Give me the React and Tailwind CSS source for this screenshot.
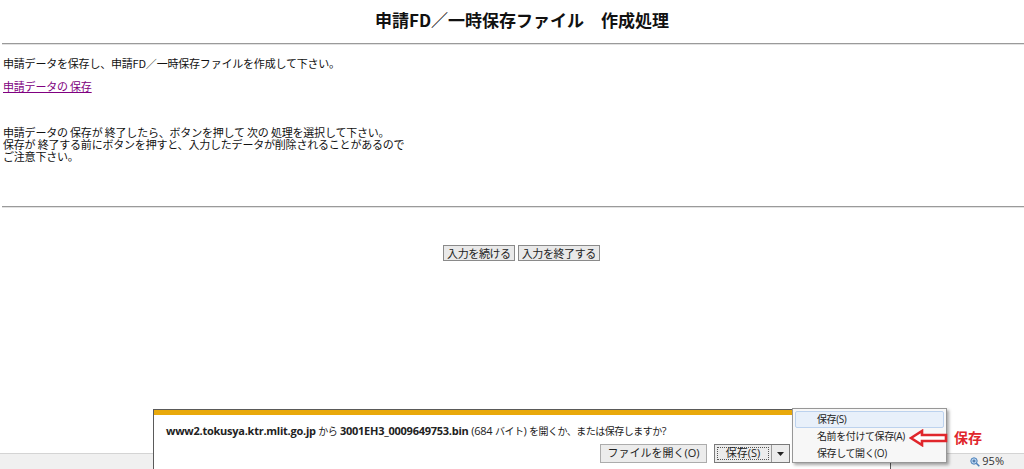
import React from 'react';

const JP = { fontFamily: '"MS PGothic", "Noto Sans CJK JP", sans-serif' };
const UI = { fontFamily: '"Open Sans", "Noto Sans CJK JP", sans-serif' };

function PageButton({ children }) {
  return (
    <button
      className="h-[16px] px-[3px] border border-[#8a8a8a] bg-[#e9e9e9] text-[11px] leading-[14px] tracking-[-0.4px] text-[#222]"
      style={JP}
    >
      {children}
    </button>
  );
}

function Rule() {
  return <div className="ml-[2px] h-[2px] border-t border-[#9a9a9a] border-b border-b-[#e2e2e2]" />;
}

function RedArrow() {
  return (
    <svg width="40" height="18" viewBox="0 0 40 18">
      <polygon
        points="2,9 13,2 13,6 37,6 37,12 13,12 13,16"
        fill="#fff"
        stroke="#e0262b"
        strokeWidth="2.6"
        strokeLinejoin="miter"
      />
    </svg>
  );
}

function Jp({ children }) {
  return <span className="text-[10px] tracking-[-0.5px]">{children}</span>;
}

function DownloadBar() {
  return (
    <div className="absolute left-[153px] top-[409px] w-[738px] h-[70px] bg-white border border-[#5a5a5a]">
      <div className="h-[5px] bg-[#e9a90b]" />
      <div className="pl-[12px] pt-[9px] text-[11px] leading-[14px] tracking-[-0.25px] text-[#222] whitespace-nowrap" style={UI}>
        <span className="font-bold">www2.tokusya.ktr.mlit.go.jp</span> <Jp>から</Jp>{' '}
        <span className="font-bold">3001EH3_0009649753.bin</span> (684 <Jp>バイト</Jp>) <Jp>を開くか、または保存しますか</Jp>?
      </div>
      <div className="flex items-center pl-[446px] pt-[6px] gap-[7px]">
        <div
          className="w-[107px] h-[19px] flex items-center justify-center border border-[#acacac] bg-[#ececec] text-[11px] text-[#222]"
          style={UI}
        >
          ファイルを開く(O)
        </div>
        <div className="flex h-[19px] border border-[#7a7a7a] bg-[#ececec]">
          <div className="w-[56px] flex items-center justify-center p-[2px]">
            <div className="w-full h-full flex items-center justify-center border border-dotted border-[#555] text-[11px] text-[#222]" style={UI}>
              保存(S)
            </div>
          </div>
          <div className="w-[18px] border-l border-[#9a9a9a] flex items-center justify-center">
            <svg width="7" height="4" viewBox="0 0 7 4"><polygon points="0,0 7,0 3.5,4" fill="#222" /></svg>
          </div>
        </div>
      </div>
    </div>
  );
}

function SaveMenu() {
  const items = ['保存(S)', '名前を付けて保存(A)', '保存して開く(O)'];
  return (
    <div className="absolute left-[792px] top-[408px] w-[155px] h-[55px] bg-[#f7f7f7] border border-[#979797] shadow-[2px_2px_3px_rgba(0,0,0,0.35)] p-[2px]">
      {items.map((t, i) => (
        <div
          key={t}
          className={
            'h-[17px] pl-[21px] text-[10px] leading-[15px] tracking-[-0.4px] text-[#222] ' +
            (i === 0 ? 'bg-[#e8f0fa] border border-[#bcd2ee] rounded-[2px]' : 'border border-transparent')
          }
          style={UI}
        >
          {t}
        </div>
      ))}
    </div>
  );
}

export default function App() {
  return (
    <div className="relative w-[1024px] h-[469px] overflow-hidden bg-white flex flex-col">
      <div className="flex-1 flex flex-col">
        <h1 className="pt-[9px] pl-[20px] h-[43px] text-center text-[17px] font-bold leading-[22px] text-[#111]" style={JP}>
          申請FD／一時保存ファイル　作成処理
        </h1>
        <Rule />
        <div className="pl-[3px] pt-[12px] text-[11px] leading-[12px] tracking-[-0.2px] text-[#111]" style={JP}>
          <p>申請データを保存し、申請FD／一時保存ファイルを作成して下さい。</p>
          <p className="mt-[11px]">
            <a href="#" className="text-[#800080] underline">申請データの 保存</a>
          </p>
          <p className="mt-[34px]">
            申請データの 保存が 終了したら、ボタンを押して 次の 処理を選択して下さい。
            <br />
            保存が 終了する前にボタンを押すと、入力したデータが削除されることがあるので
            <br />
            ご注意下さい。
          </p>
        </div>
        <div className="mt-[44px]">
          <Rule />
        </div>
        <div className="mt-[37px] flex justify-center gap-[3px] pl-[19px]">
          <PageButton>入力を続ける</PageButton>
          <PageButton>入力を終了する</PageButton>
        </div>
      </div>

      <div className="h-[16px] bg-[#f0f0f0] border-t border-[#d4d4d4] flex items-center justify-end pr-[20px]">
        <div className="flex items-center gap-[2px] text-[11px] text-[#333]" style={UI}>
          <svg width="10" height="10" viewBox="0 0 10 10">
            <circle cx="4" cy="4" r="3.2" fill="#bcd6f2" stroke="#4a7fb8" strokeWidth="1" />
            <line x1="6.3" y1="6.3" x2="9.3" y2="9.3" stroke="#4a7fb8" strokeWidth="1.6" />
            <line x1="2.5" y1="4" x2="5.5" y2="4" stroke="#2a5a90" strokeWidth="0.9" />
            <line x1="4" y1="2.5" x2="4" y2="5.5" stroke="#2a5a90" strokeWidth="0.9" />
          </svg>
          95%
        </div>
      </div>

      <DownloadBar />
      <SaveMenu />
      <div className="absolute left-[909px] top-[427px] flex items-center gap-[5px]">
        <RedArrow />
        <span className="text-[14px] font-bold text-[#e0262b]" style={JP}>保存</span>
      </div>
    </div>
  );
}
